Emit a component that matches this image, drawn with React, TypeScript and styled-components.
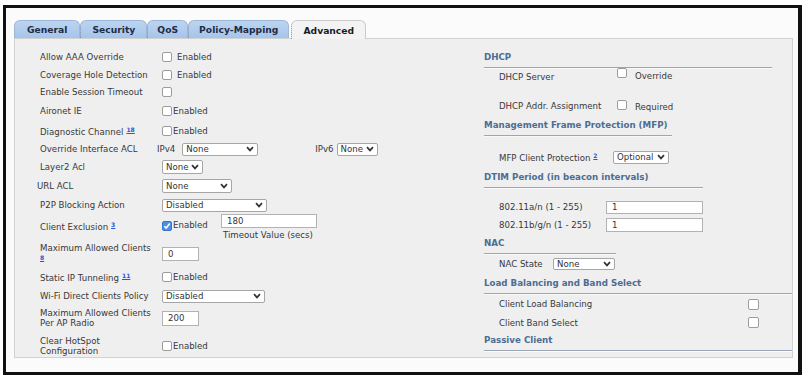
import React from "react";
import styled, { createGlobalStyle } from "styled-components";

const GlobalStyle = createGlobalStyle`
  html, body {
    margin: 0;
    padding: 0;
    background: #ffffff;
  }
  body {
    font-family: "DejaVu Sans", Verdana, sans-serif;
    color: #3b3b3b;
  }
`;

const Frame = styled.div`
  margin: 5px 0 0 3px;
  width: 799px;
  height: 370px;
  box-sizing: border-box;
  border: 3px solid #111;
  border-right-width: 4px;
  background: #fbfbfb;
  padding: 12px 5px 0 8px;
`;

const TabBar = styled.div`
  display: flex;
  align-items: flex-end;
  height: 18px;
`;

const Tab = styled.div<{ $active?: boolean; $pad: number }>`
  display: flex;
  align-items: center;
  justify-content: center;
  box-sizing: border-box;
  height: ${(p) => (p.$active ? 19 : 18)}px;
  padding: 0 ${(p) => p.$pad}px;
  margin-left: ${(p) => (p.$active ? 2 : 0)}px;
  margin-bottom: ${(p) => (p.$active ? -1 : 0)}px;
  position: relative;
  z-index: ${(p) => (p.$active ? 2 : 1)};
  border-radius: 6px 6px 0 0;
  border: 1px solid ${(p) => (p.$active ? "#cacaca" : "#9db7d8")};
  border-bottom: none;
  background: ${(p) =>
    p.$active ? "#f3f3f3" : "linear-gradient(#bcd4f1, #a6c4ea)"};
  color: ${(p) => (p.$active ? "#1c1c1c" : "#1e2c45")};
  font-size: 9.2px;
  font-weight: bold;
  white-space: nowrap;
  & + & {
    border-left: 1px dotted #7d91ab;
  }
`;

const Panel = styled.div`
  width: 779px;
  height: 320px;
  box-sizing: border-box;
  border: 1px solid #d2d2d2;
  background: #efefef;
  padding-top: 9px;
  display: grid;
  grid-template-columns: 469px 1fr;
  overflow: hidden;
`;

const LeftCol = styled.div`
  padding-left: 25px;
  display: flex;
  flex-direction: column;
`;

const RightCol = styled.div`
  display: flex;
  flex-direction: column;
`;

const Row = styled.div<{ $h: number; $top?: boolean; $mt?: number }>`
  display: flex;
  align-items: ${(p) => (p.$top ? "flex-start" : "center")};
  height: ${(p) => p.$h}px;
  margin-top: ${(p) => p.$mt ?? 0}px;
  flex-shrink: 0;
`;

const Label = styled.div<{ $w?: number; $shift?: number; $indent?: number; $mt?: number }>`
  width: ${(p) => p.$w ?? 122}px;
  margin-left: ${(p) => (p.$shift ?? 0) + (p.$indent ?? 0)}px;
  margin-top: ${(p) => p.$mt ?? 0}px;
  flex-shrink: 0;
  font-size: 8.6px;
  line-height: 10px;
  color: #383838;
  white-space: nowrap;
`;

const Sup = styled.a`
  font-size: 6px;
  font-weight: bold;
  color: #2857d6;
  text-decoration: underline;
  vertical-align: 3px;
  margin-left: 3px;
  cursor: pointer;
`;

const Text = styled.span<{ $ml?: number; $mt?: number }>`
  font-size: 8.6px;
  line-height: 11px;
  color: #383838;
  margin-left: ${(p) => p.$ml ?? 0}px;
  margin-top: ${(p) => p.$mt ?? 0}px;
  white-space: nowrap;
`;

const Box = styled.span<{ $checked?: boolean; $mt?: number; $size?: number }>`
  display: inline-flex;
  align-items: center;
  justify-content: center;
  flex-shrink: 0;
  box-sizing: border-box;
  width: ${(p) => p.$size ?? 10}px;
  height: ${(p) => p.$size ?? 10}px;
  margin-top: ${(p) => p.$mt ?? 0}px;
  border: 1px solid ${(p) => (p.$checked ? "#3577cf" : "#9c9c9c")};
  border-radius: 2px;
  background: ${(p) => (p.$checked ? "#4a90e6" : "#ffffff")};
`;

const Check = ({ checked, mt, size }: { checked?: boolean; mt?: number; size?: number }) => (
  <Box $checked={checked} $mt={mt} $size={size}>
    {checked && (
      <svg width="8" height="8" viewBox="0 0 8 8">
        <polyline points="1.3,4.2 3.2,6.1 6.8,1.6" fill="none" stroke="#fff" strokeWidth="1.6" />
      </svg>
    )}
  </Box>
);

const SelectBox = styled.div<{ $w: number; $h?: number }>`
  display: inline-flex;
  align-items: center;
  justify-content: space-between;
  flex-shrink: 0;
  box-sizing: border-box;
  width: ${(p) => p.$w}px;
  height: ${(p) => p.$h ?? 13}px;
  padding: 0 3px 0 3px;
  border: 1px solid #a6a6a6;
  border-radius: 2px;
  background: #fff;
  font-size: 8.6px;
  color: #333;

  span {
    white-space: nowrap;
  }

  svg {
    flex-shrink: 0;
    margin-left: 2px;
  }
`;

const Select = ({ w, h, value }: { w: number; h?: number; value: string }) => (
  <SelectBox $w={w} $h={h}>
    <span>{value}</span>
    <svg width="8" height="6" viewBox="0 0 8 6">
      <polyline points="1,1.2 4,4.4 7,1.2" fill="none" stroke="#333" strokeWidth="1.7" />
    </svg>
  </SelectBox>
);

const Input = styled.div<{ $w: number; $h?: number }>`
  display: flex;
  align-items: center;
  flex-shrink: 0;
  box-sizing: border-box;
  width: ${(p) => p.$w}px;
  height: ${(p) => p.$h ?? 14}px;
  padding-left: 5px;
  border: 1px solid #b2b2b2;
  background: #fff;
  font-size: 8.6px;
  color: #333;
`;

const CheckGroup = styled.div<{ $w?: number; $mt?: number }>`
  display: flex;
  align-items: center;
  width: ${(p) => (p.$w ? `${p.$w}px` : "auto")};
  margin-top: ${(p) => p.$mt ?? 0}px;
  flex-shrink: 0;
`;

const Stack = styled.div`
  display: flex;
  flex-direction: column;
`;

const Header = styled.div<{ $w: number; $mt?: number }>`
  width: ${(p) => p.$w}px;
  margin-top: ${(p) => p.$mt ?? 0}px;
  padding: 3px 0 4px 0;
  line-height: 12px;
  font-size: 8.7px;
  font-weight: bold;
  color: #4c6d92;
  border-bottom: 1px solid #9ba7b5;
  box-shadow: 0 1px 0 #fafafa;
  flex-shrink: 0;
  white-space: nowrap;
`;

const tabs = [
  { name: "General", pad: 12 },
  { name: "Security", pad: 11 },
  { name: "QoS", pad: 9 },
  { name: "Policy-Mapping", pad: 10 },
];

export default function App() {
  return (
    <>
      <GlobalStyle />
      <Frame>
        <TabBar>
          {tabs.map((t) => (
            <Tab key={t.name} $pad={t.pad}>
              {t.name}
            </Tab>
          ))}
          <Tab $active $pad={11}>Advanced</Tab>
        </TabBar>
        <Panel>
          <LeftCol>
            <Row $h={18}>
              <Label>Allow AAA Override</Label>
              <Check />
              <Text $ml={5}>Enabled</Text>
            </Row>
            <Row $h={18}>
              <Label>Coverage Hole Detection</Label>
              <Check />
              <Text $ml={5}>Enabled</Text>
            </Row>
            <Row $h={16}>
              <Label>Enable Session Timeout</Label>
              <Check />
            </Row>
            <Row $h={22}>
              <Label>Aironet IE</Label>
              <Check />
              <Text $ml={1}>Enabled</Text>
            </Row>
            <Row $h={18}>
              <Label>
                Diagnostic Channel<Sup>18</Sup>
              </Label>
              <Check />
              <Text $ml={1}>Enabled</Text>
            </Row>
            <Row $h={18}>
              <Label $w={117}>Override Interface ACL</Label>
              <Text>IPv4</Text>
              <Text $ml={7} />
              <Select w={76} value="None" />
              <Text $ml={57}>IPv6</Text>
              <Text $ml={3} />
              <Select w={41} value="None" />
            </Row>
            <Row $h={18}>
              <Label>Layer2 Acl</Label>
              <Select w={41} h={14} value="None" />
            </Row>
            <Row $h={20}>
              <Label $w={125} $shift={-3}>URL ACL</Label>
              <Select w={70} h={14} value="None" />
            </Row>
            <Row $h={18}>
              <Label>P2P Blocking Action</Label>
              <Select w={105} value="Disabled" />
            </Row>
            <Row $h={28} $top>
              <Label $mt={6}>
                Client Exclusion<Sup>3</Sup>
              </Label>
              <CheckGroup $w={59} $mt={6}>
                <Check checked />
                <Text $ml={1}>Enabled</Text>
              </CheckGroup>
              <Stack>
                <Input $w={96}>180</Input>
                <Text $ml={2} $mt={2}>Timeout Value (secs)</Text>
              </Stack>
            </Row>
            <Row $h={24}>
              <Label>
                Maximum Allowed Clients
                <br />
                <Sup style={{ marginLeft: 0 }}>8</Sup>
              </Label>
              <Input $w={37}>0</Input>
            </Row>
            <Row $h={22}>
              <Label>
                Static IP Tunneling<Sup>11</Sup>
              </Label>
              <Check />
              <Text $ml={1}>Enabled</Text>
            </Row>
            <Row $h={16}>
              <Label>Wi-Fi Direct Clients Policy</Label>
              <Select w={103} value="Disabled" />
            </Row>
            <Row $h={28}>
              <Label>
                Maximum Allowed Clients
                <br />
                Per AP Radio
              </Label>
              <Input $w={37} $h={15}>200</Input>
            </Row>
            <Row $h={28}>
              <Label>
                Clear HotSpot
                <br />
                Configuration
              </Label>
              <Check />
              <Text $ml={1}>Enabled</Text>
            </Row>
          </LeftCol>

          <RightCol>
            <Header $w={288}>DHCP</Header>
            <Row $h={18} $top>
              <Label $indent={15} $w={118} $mt={4}>DHCP Server</Label>
              <Check />
              <Text $ml={8} $mt={3}>Override</Text>
            </Row>
            <Row $h={20} $mt={10}>
              <Label $indent={15} $w={118}>DHCP Addr. Assignment</Label>
              <Check mt={-2} />
              <Text $ml={8} $mt={2}>Required</Text>
            </Row>
            <Header $w={188}>Management Frame Protection (MFP)</Header>
            <Row $h={18} $mt={12}>
              <Label $indent={15} $w={114}>
                MFP Client Protection<Sup>2</Sup>
              </Label>
              <Select w={56} value="Optional" />
            </Row>
            <Header $w={219} $mt={2}>DTIM Period (in beacon intervals)</Header>
            <Row $h={18} $mt={10}>
              <Label $indent={15} $w={107}>802.11a/n (1 - 255)</Label>
              <Input $w={97} $h={13}>1</Input>
            </Row>
            <Row $h={18}>
              <Label $indent={15} $w={107}>802.11b/g/n (1 - 255)</Label>
              <Input $w={97} $h={14}>1</Input>
            </Row>
            <Header $w={132}>NAC</Header>
            <Row $h={16} $mt={2}>
              <Label $indent={15} $w={54}>NAC State</Label>
              <Select w={62} h={12} value="None" />
            </Row>
            <Header $w={309} $mt={2}>Load Balancing and Band Select</Header>
            <Row $h={20}>
              <Label $indent={15} $w={249}>Client Load Balancing</Label>
              <Check size={11} />
            </Row>
            <Row $h={17}>
              <Label $indent={15} $w={249}>Client Band Select</Label>
              <Check size={11} />
            </Row>
            <Header $w={309}>Passive Client</Header>
          </RightCol>
        </Panel>
      </Frame>
    </>
  );
}
